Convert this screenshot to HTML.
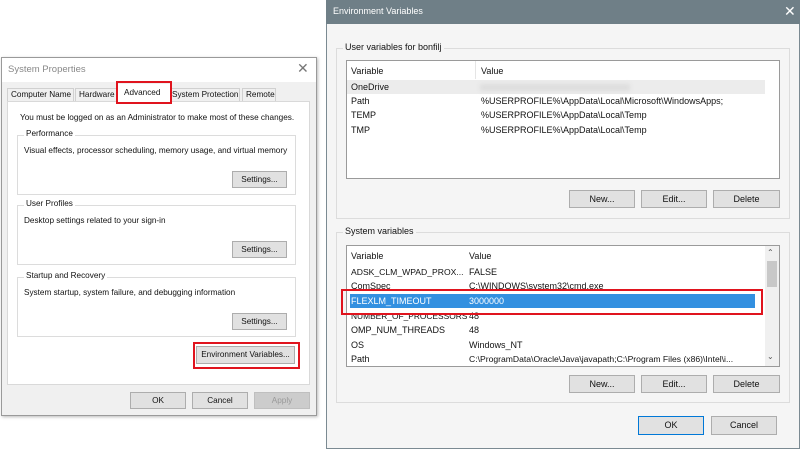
<!DOCTYPE html>
<html><head><style>
*{box-sizing:border-box;margin:0;padding:0}
body{width:800px;height:449px;background:#fff;position:relative;overflow:hidden;font-family:"Liberation Sans",sans-serif;font-size:9px;color:#111}
.a{position:absolute;white-space:nowrap}
.btn{position:absolute;background:#e1e1e1;border:1px solid #adadad;text-align:center;font-size:9px;line-height:16px;color:#111;white-space:nowrap}
.grp{position:absolute;border:1px solid #dcdcdc}
.lbl{position:absolute;background:inherit;padding:0 2px;top:-7px;left:6px;white-space:nowrap}
.red{position:absolute;border:2px solid #e0141e}
.L{font-size:8.2px}
</style></head><body>
<!-- Left dialog -->
<div class="a" style="left:1px;top:57px;width:316px;height:359px;background:#f0f0f0;border:1px solid #9a9a9a;box-shadow:1px 1px 3px #bbb"></div>
<div class="a" style="left:2px;top:58px;width:314px;height:24px;background:#fff"></div>
<div class="a" style="left:8px;top:64px;color:#888;font-size:9.5px">System Properties</div>
<div class="a" style="left:297px;top:60px;color:#777;font-size:14px">✕</div>
<div class="a L" style="left:7px;top:88px;width:67px;height:14px;border:1px solid #d0d0d0;padding-left:3px;line-height:12px">Computer Name</div>
<div class="a L" style="left:75px;top:88px;width:43px;height:14px;border:1px solid #d0d0d0;padding-left:3px;line-height:12px">Hardware</div>
<div class="a L" style="left:169px;top:88px;width:71px;height:14px;border:1px solid #d0d0d0;padding-left:2px;line-height:12px">System Protection</div>
<div class="a L" style="left:242px;top:88px;width:34px;height:14px;border:1px solid #d0d0d0;padding-left:3px;line-height:12px">Remote</div>
<div class="a" style="left:7px;top:101px;width:303px;height:284px;background:#fff;border:1px solid #d9d9d9"></div>
<div class="a L" style="left:118px;top:84px;width:52px;height:18px;background:#fff;padding-left:6px;line-height:17px">Advanced</div>
<div class="red" style="left:116px;top:81px;width:56px;height:23px"></div>
<div class="a L" style="left:20px;top:113px">You must be logged on as an Administrator to make most of these changes.</div>
<div class="grp L" style="left:17px;top:135px;width:279px;height:60px;background:#fff"><span class="lbl">Performance</span></div>
<div class="a L" style="left:24px;top:146px">Visual effects, processor scheduling, memory usage, and virtual memory</div>
<div class="btn L" style="left:232px;top:171px;width:55px;height:17px">Settings...</div>
<div class="grp L" style="left:17px;top:205px;width:279px;height:60px;background:#fff"><span class="lbl">User Profiles</span></div>
<div class="a L" style="left:24px;top:216px">Desktop settings related to your sign-in</div>
<div class="btn L" style="left:232px;top:241px;width:55px;height:17px">Settings...</div>
<div class="grp L" style="left:17px;top:277px;width:279px;height:60px;background:#fff"><span class="lbl">Startup and Recovery</span></div>
<div class="a L" style="left:24px;top:288px">System startup, system failure, and debugging information</div>
<div class="btn L" style="left:232px;top:313px;width:55px;height:17px">Settings...</div>
<div class="btn L" style="left:196px;top:346px;width:99px;height:18px">Environment Variables...</div>
<div class="red" style="left:193px;top:342px;width:107px;height:27px"></div>
<div class="btn L" style="left:130px;top:392px;width:56px;height:17px">OK</div>
<div class="btn L" style="left:192px;top:392px;width:56px;height:17px">Cancel</div>
<div class="btn L" style="left:254px;top:392px;width:56px;height:17px;color:#999;background:#ccc;border-color:#bfbfbf">Apply</div>

<!-- Right dialog -->
<div class="a" style="left:326px;top:0;width:474px;height:449px;background:#f5f5f5;border:1px solid #7b8a92"></div>
<div class="a" style="left:326px;top:0;width:474px;height:24px;background:#6f7f87"></div>
<div class="a" style="left:333px;top:6px;color:#fff">Environment Variables</div>
<div class="a" style="left:784px;top:3px;color:#fff;font-size:14px">✕</div>

<div class="grp" style="left:336px;top:48px;width:454px;height:171px;background:#f5f5f5"><span class="lbl">User variables for bonfilj</span></div>
<div class="a" style="left:346px;top:60px;width:434px;height:119px;background:#fff;border:1px solid #9a9a9a"></div>
<div class="a" style="left:475px;top:61px;width:1px;height:18px;background:#e5e5e5"></div>
<div class="a" style="left:351px;top:66px">Variable</div><div class="a" style="left:481px;top:66px">Value</div>
<div class="a" style="left:347px;top:80px;width:418px;height:14px;background:#ececec"></div>
<div class="a" style="left:480px;top:84px;width:150px;height:7px;background:#ddd;filter:blur(2px)"></div>
<div class="a" style="left:351px;top:82px">OneDrive</div>
<div class="a" style="left:351px;top:96px">Path</div><div class="a" style="left:481px;top:96px">%USERPROFILE%\AppData\Local\Microsoft\WindowsApps;</div>
<div class="a" style="left:351px;top:110px">TEMP</div><div class="a" style="left:481px;top:110px">%USERPROFILE%\AppData\Local\Temp</div>
<div class="a" style="left:351px;top:125px">TMP</div><div class="a" style="left:481px;top:125px">%USERPROFILE%\AppData\Local\Temp</div>
<div class="btn" style="left:569px;top:190px;width:66px;height:18px">New...</div>
<div class="btn" style="left:641px;top:190px;width:66px;height:18px">Edit...</div>
<div class="btn" style="left:713px;top:190px;width:67px;height:18px">Delete</div>

<div class="grp" style="left:336px;top:232px;width:454px;height:171px;background:#f5f5f5"><span class="lbl">System variables</span></div>
<div class="a" style="left:346px;top:245px;width:434px;height:122px;background:#fff;border:1px solid #9a9a9a"></div>
<div class="a" style="left:765px;top:246px;width:14px;height:120px;background:#f0f0f0"></div>
<div class="a" style="left:767px;top:261px;width:10px;height:26px;background:#c8c8c8"></div>
<div class="a" style="left:767px;top:248px;font-size:8px;color:#555">⌃</div>
<div class="a" style="left:767px;top:352px;font-size:8px;color:#555">⌄</div>
<div class="a" style="left:351px;top:251px">Variable</div><div class="a" style="left:469px;top:251px">Value</div>
<div class="a" style="left:351px;top:267px;font-size:8.6px">ADSK_CLM_WPAD_PROX...</div><div class="a" style="left:469px;top:267px">FALSE</div>
<div class="a" style="left:351px;top:281px">ComSpec</div><div class="a" style="left:469px;top:281px">C:\WINDOWS\system32\cmd.exe</div>
<div class="a" style="left:350px;top:294px;width:405px;height:14px;background:#3390e0"></div>
<div class="a" style="left:351px;top:296px;color:#fff">FLEXLM_TIMEOUT</div><div class="a" style="left:469px;top:296px;color:#fff">3000000</div>
<div class="a" style="left:351px;top:311px;font-size:8.4px">NUMBER_OF_PROCESSORS</div><div class="a" style="left:469px;top:311px">48</div>
<div class="a" style="left:351px;top:325px">OMP_NUM_THREADS</div><div class="a" style="left:469px;top:325px">48</div>
<div class="a" style="left:351px;top:340px">OS</div><div class="a" style="left:469px;top:340px">Windows_NT</div>
<div class="a" style="left:351px;top:354px">Path</div>
<div class="a" style="left:469px;top:354px;width:294px;height:12px;overflow:hidden;font-size:8.6px">C:\ProgramData\Oracle\Java\javapath;C:\Program Files (x86)\Intel\i...</div>
<div class="red" style="left:341px;top:289px;width:422px;height:26px"></div>
<div class="btn" style="left:569px;top:375px;width:66px;height:18px">New...</div>
<div class="btn" style="left:641px;top:375px;width:66px;height:18px">Edit...</div>
<div class="btn" style="left:713px;top:375px;width:67px;height:18px">Delete</div>
<div class="btn" style="left:638px;top:416px;width:66px;height:19px;border:1px solid #0078d7">OK</div>
<div class="btn" style="left:711px;top:416px;width:66px;height:19px">Cancel</div>
</body></html>
